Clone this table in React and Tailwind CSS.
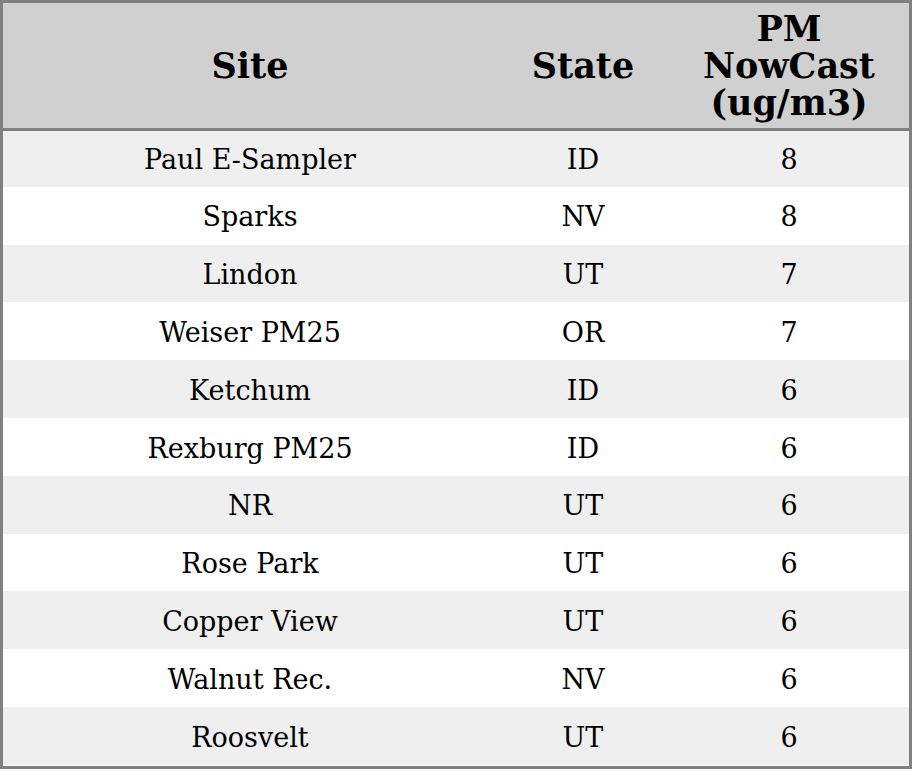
const rows = [
  { site: 'Paul E-Sampler', state: 'ID', value: 8 },
  { site: 'Sparks', state: 'NV', value: 8 },
  { site: 'Lindon', state: 'UT', value: 7 },
  { site: 'Weiser PM25', state: 'OR', value: 7 },
  { site: 'Ketchum', state: 'ID', value: 6 },
  { site: 'Rexburg PM25', state: 'ID', value: 6 },
  { site: 'NR', state: 'UT', value: 6 },
  { site: 'Rose Park', state: 'UT', value: 6 },
  { site: 'Copper View', state: 'UT', value: 6 },
  { site: 'Walnut Rec.', state: 'NV', value: 6 },
  { site: 'Roosvelt', state: 'UT', value: 6 },
];

export default function App() {
  return (
    <div className="w-[912px] h-[769px] bg-white font-['DejaVu_Serif',serif] text-black">
      <div className="border-[3px] border-[#808080] h-full">
        <table className="w-full border-collapse table-fixed">
          <colgroup>
            <col className="w-[494px]" />
            <col className="w-[172px]" />
            <col className="w-[240px]" />
          </colgroup>
          <thead>
            <tr className="bg-[#d0d0d0] h-[126px]">
              <th className="border-b-[3px] border-[#808080] text-[35px] leading-[37px] font-bold text-center align-middle p-0">
                Site
              </th>
              <th className="border-b-[3px] border-[#808080] text-[35px] leading-[37px] font-bold text-center align-middle p-0">
                State
              </th>
              <th className="border-b-[3px] border-[#808080] text-[35px] leading-[37px] font-bold text-center align-middle p-0">
                PM
                <br />
                NowCast
                <br />
                (ug/m3)
              </th>
            </tr>
          </thead>
          <tbody>
            {rows.map((r, i) => (
              <tr
                key={r.site}
                className={i % 2 === 0 ? 'bg-[#efefef] h-[57.8px]' : 'bg-white h-[57.8px]'}
              >
                <td className="text-center text-[27px] pt-[4px] pb-0 px-0">{r.site}</td>
                <td className="text-center text-[27px] pt-[4px] pb-0 px-0">{r.state}</td>
                <td className="text-center text-[27px] pt-[4px] pb-0 px-0">{r.value}</td>
              </tr>
            ))}
          </tbody>
        </table>
      </div>
    </div>
  );
}
